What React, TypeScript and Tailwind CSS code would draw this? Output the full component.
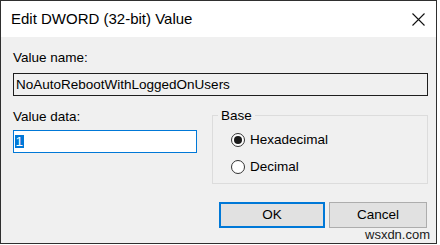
import React from 'react';

const font = { fontFamily: '"Liberation Sans", Arial, sans-serif' };

const Radio: React.FC<{ checked?: boolean; label: string }> = ({ checked, label }) => (
  <div className="flex items-center h-[14px]">
    <span className="w-[14px] h-[14px] rounded-full border border-[#333333] bg-white flex items-center justify-center shrink-0">
      {checked && <span className="w-[8px] h-[8px] rounded-full bg-[#1a1a1a]" />}
    </span>
    <span className="ml-[5px] text-[13.5px] leading-[16px] text-black">{label}</span>
  </div>
);

const App: React.FC = () => {
  return (
    <div className="w-[440px] h-[245px] bg-white relative overflow-hidden" style={font}>
      {/* Dialog window */}
      <div className="w-[437px] h-[244px] border border-[#2f2f2f] flex flex-col bg-[#f0f0f0]">
        {/* Title bar */}
        <div className="h-[36px] bg-white flex items-center justify-between pl-[10px] pr-[11px] shrink-0">
          <span className="text-[15px] leading-[18px] text-black">Edit DWORD (32-bit) Value</span>
          <svg width="13" height="13" viewBox="0 0 13 13">
            <path d="M0.5 0.5 L12.5 12.5 M12.5 0.5 L0.5 12.5" stroke="#111" strokeWidth="1.1" fill="none" />
          </svg>
        </div>

        {/* Body */}
        <div className="flex-1 pl-[12px] pr-[8px] pt-[13px] text-[13.5px] leading-[16px] text-black">
          <div>Value name:</div>
          <div className="mt-[7px] h-[23px] border border-[#1e1e1e] bg-[#f0f0f0] flex items-center pl-[2px]">
            NoAutoRebootWithLoggedOnUsers
          </div>

          <div className="mt-[13px] flex">
            {/* Value data */}
            <div className="w-[184px] shrink-0">
              <div>Value data:</div>
              <div className="mt-[5px] h-[23px] border border-[#0078d7] bg-white flex items-center pl-[1px]">
                <span className="bg-[#0078d7] text-white leading-[13px] px-[0.5px]">1</span>
              </div>
            </div>

            {/* Base group */}
            <div className="ml-[15px] flex-1 mt-[6px] h-[69px] border border-[#dcdcdc] relative pl-[18px] pt-[17px] flex flex-col gap-[13px]">
              <span className="absolute -top-[7px] left-[5px] px-[3px] bg-[#f0f0f0] leading-[14px]">Base</span>
              <Radio checked label="Hexadecimal" />
              <Radio label="Decimal" />
            </div>
          </div>

          {/* Buttons */}
          <div className="mt-[18px] flex justify-end gap-[4px] pr-[1px]">
            <button className="w-[106px] h-[26px] bg-[#e1e1e1] border-2 border-[#0078d7] text-[13.5px] text-black">
              OK
            </button>
            <button className="w-[98px] h-[26px] bg-[#e1e1e1] border border-[#adadad] text-[13.5px] text-black">
              Cancel
            </button>
          </div>
        </div>
      </div>

      {/* Watermark */}
      <span className="absolute left-[365px] top-[227px] text-[13px] leading-[15px] text-[#1a1a1a]">wsxdn.com</span>
    </div>
  );
};

export default App;
